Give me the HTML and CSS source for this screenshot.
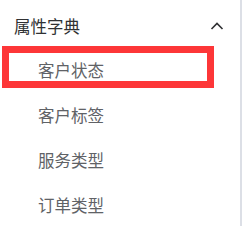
FILE: index.html
```html
<!DOCTYPE html>
<html lang="zh-CN">
<head>
    <meta charset="UTF-8">
    <meta name="viewport" content="width=device-width, initial-scale=1.0">
    <title>属性字典</title>
    <link rel="stylesheet" href="styles.css">
</head>
<body>
    <div class="menu">
        <div class="submenu-title">
            <span>属性字典</span>
            <svg class="arrow" width="14" height="8" viewBox="0 0 14 8">
                <path d="M1.5 7 L7 1.5 L12.5 7" fill="none" stroke="#303133" stroke-width="1.6"/>
            </svg>
        </div>
        <ul class="submenu">
            <li class="menu-item active">客户状态<span class="mark"></span></li>
            <li class="menu-item">客户标签</li>
            <li class="menu-item">服务类型</li>
            <li class="menu-item">订单类型</li>
        </ul>
    </div>
</body>
</html>
```

FILE: styles.css
```css
body {
    margin: 0;
    background-color: white;
    font-family: "Noto Sans CJK SC", "Noto Sans", sans-serif;
}
.menu {
    width: 242px;
    height: 226px;
    padding-top: 3px;
    box-sizing: border-box;
    border-right: 2px solid #dcdfe6;
    overflow: hidden;
}
.submenu-title {
    display: flex;
    align-items: center;
    justify-content: space-between;
    height: 45px;
    padding: 0 16px 0 14px;
    font-size: 16.5px;
    color: #303133;
}
.arrow {
    display: block;
}
.submenu {
    list-style: none;
    margin: 0;
    padding: 0;
}
.menu-item {
    position: relative;
    height: 45px;
    line-height: 45px;
    padding-left: 38px;
    font-size: 16.5px;
    color: #606266;
}
.mark {
    position: absolute;
    top: -2px;
    left: 2px;
    width: 212px;
    height: 42px;
    box-sizing: border-box;
    border: 7px solid #fd3638;
}
```
